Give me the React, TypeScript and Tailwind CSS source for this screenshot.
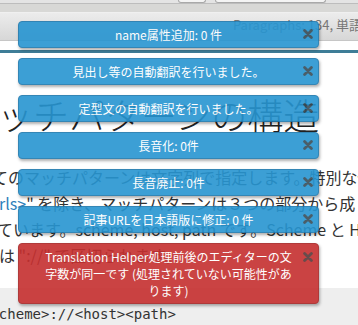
import React from 'react';

type Toast = { id: number; text: string; kind: 'info' | 'error' };

const TOASTS: Toast[] = [
  { id: 1, text: 'name属性追加: 0 件', kind: 'info' },
  { id: 2, text: '見出し等の自動翻訳を行いました。', kind: 'info' },
  { id: 3, text: '定型文の自動翻訳を行いました。', kind: 'info' },
  { id: 4, text: '長音化: 0件', kind: 'info' },
  { id: 5, text: '長音廃止: 0件', kind: 'info' },
  { id: 6, text: '記事URLを日本語版に修正: 0 件', kind: 'info' },
  {
    id: 7,
    text: 'Translation Helper処理前後のエディターの文字数が同一です (処理されていない可能性があります)',
    kind: 'error',
  },
];

const CloseX = () => (
  <svg viewBox="0 0 10 10" className="w-[10px] h-[10px]">
    <path d="M1.6 1.6L8.4 8.4M8.4 1.6L1.6 8.4" stroke="currentColor" strokeWidth="2.8" strokeLinecap="round" />
  </svg>
);

const App: React.FC = () => {
  return (
    <div
      className="relative w-[358px] h-[325px] overflow-hidden bg-white"
      style={{ fontFamily: '"Noto Sans CJK JP", "Noto Sans", sans-serif' }}
    >
      {/* editor toolbar */}
      <div className="h-[4px] bg-[#e4e4e4] border-b border-[#bdbdbd] flex gap-[9px] pl-[178px]">
        <div className="w-[28px] h-[3px] bg-[#f4f4f4] border border-t-0 border-[#a9a9a9] rounded-b-[3px]" />
        <div className="w-[111px] h-[3px] bg-[#f4f4f4] border border-t-0 border-[#a9a9a9] rounded-b-[3px]" />
      </div>
      <div className="h-[9px] bg-[#d8d8d6] border-b border-[#f0f0f0]" />
      <div className="h-[28px] bg-gradient-to-b from-[#ececec] to-[#d7d7d7] border-b border-[#c6c6c6] pl-[233px] pt-[4px] whitespace-nowrap text-[13px] leading-[16px] text-[#777]">
        Paragraphs: 134, 単語数: 2,418
      </div>
      <div className="h-[9px] bg-white" />
      <div className="h-[3px] bg-[#3e7d97]" />

      {/* article */}
      <h1 className="mt-[39px] -ml-[39px] whitespace-nowrap text-[36px] leading-[44px] font-light text-[#222]">
        マッチパターンの構造
      </h1>
      <div className="mt-[28px] text-[16px] leading-[26px] text-[#333] whitespace-nowrap">
        <div className="-ml-[24px]">全てのマッチパターンは文字列で指定します。特別な値 "</div>
        <div className="-ml-[1px]">
          <span className="text-[#2f80bb]">rls&gt;</span>" を除き、マッチパターンは３つの部分から成り立って
        </div>
        <div className="-ml-[3px]">ています。scheme, host, path です。Scheme と Host</div>
        <div className="-ml-[1px]">は "://" で区切られます。</div>
      </div>
      <div className="mt-[20px] h-[40px] bg-[#eeeeee] pt-[16px]">
        <pre
          className="-ml-[18px] text-[14px] leading-[20px] text-[#333]"
          style={{ fontFamily: '"DejaVu Sans Mono", monospace' }}
        >
          {'<scheme>://<host><path>'}
        </pre>
      </div>

      {/* toast stack */}
      <div className="absolute left-[18px] top-[21px] w-[301px] flex flex-col gap-[10px]">
        {TOASTS.map(t => (
          <div
            key={t.id}
            className={`relative rounded-[4px] border px-[25px] py-[4px] text-center text-[12px] leading-[17px] text-white opacity-90 shadow-[1px_2px_3px_rgba(0,0,0,0.35)] ${
              t.kind === 'error' ? 'bg-[#c52f2f] border-[#a82626]' : 'bg-[#2795d1] border-[#1f79ae]'
            }`}
          >
            {t.text}
            <span
              className={`absolute right-[5px] ${t.kind === 'error' ? 'top-[8px]' : 'top-[7px]'} text-[#3c3c3c] opacity-80`}
            >
              <CloseX />
            </span>
          </div>
        ))}
      </div>
    </div>
  );
};

export default App;
